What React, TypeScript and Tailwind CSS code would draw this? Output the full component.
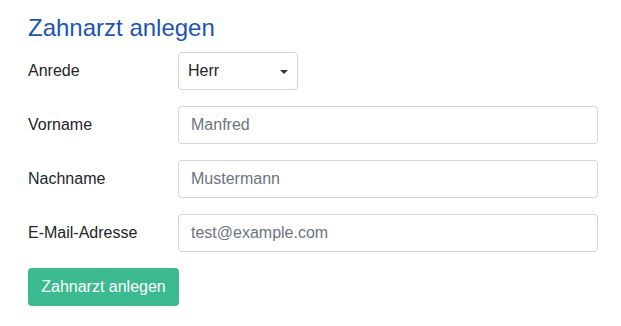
import React from "react";

const fields = [
  { label: "Vorname", placeholder: "Manfred", type: "text" },
  { label: "Nachname", placeholder: "Mustermann", type: "text" },
  { label: "E-Mail-Adresse", placeholder: "test@example.com", type: "email" },
];

export default function App() {
  return (
    <div
      className="min-h-[326px] w-[621px] bg-white pl-[28px] pr-[23px] pt-[14px] text-[16px] text-[#212529]"
      style={{ fontFamily: '"Liberation Sans", Arial, sans-serif' }}
    >
      <h1 className="mb-[10px] text-[24px] leading-[28px] font-normal text-[#1a55b4]">Zahnarzt anlegen</h1>

      <form className="flex flex-col gap-[16px]" onSubmit={(e) => e.preventDefault()}>
        <div className="flex items-center">
          <label className="w-[150px] shrink-0">Anrede</label>
          <div className="relative w-[120px]">
            <select
              defaultValue="Herr"
              className="h-[38px] w-full appearance-none rounded-[4px] border border-[#ced4da] bg-white pl-[9px] pr-[24px] text-[16px] text-[#212529] outline-none"
            >
              <option>Herr</option>
              <option>Frau</option>
            </select>
            {/* caret */}
            <span className="pointer-events-none absolute right-[10px] top-[18px] h-0 w-0 border-x-[4px] border-t-[4px] border-x-transparent border-t-[#333]" />
          </div>
        </div>

        {fields.map((f) => (
          <div key={f.label} className="flex items-center">
            <label className="w-[150px] shrink-0">{f.label}</label>
            <input
              type={f.type}
              placeholder={f.placeholder}
              className="h-[38px] flex-1 rounded-[4px] border border-[#ced4da] bg-white px-[12px] text-[16px] text-[#495057] outline-none placeholder:text-[#6c757d]"
            />
          </div>
        ))}

        <div>
          <button
            type="submit"
            className="h-[38px] w-[151px] rounded-[4px] bg-[#3cba8f] text-[16px] text-white"
          >
            Zahnarzt anlegen
          </button>
        </div>
      </form>
    </div>
  );
}
